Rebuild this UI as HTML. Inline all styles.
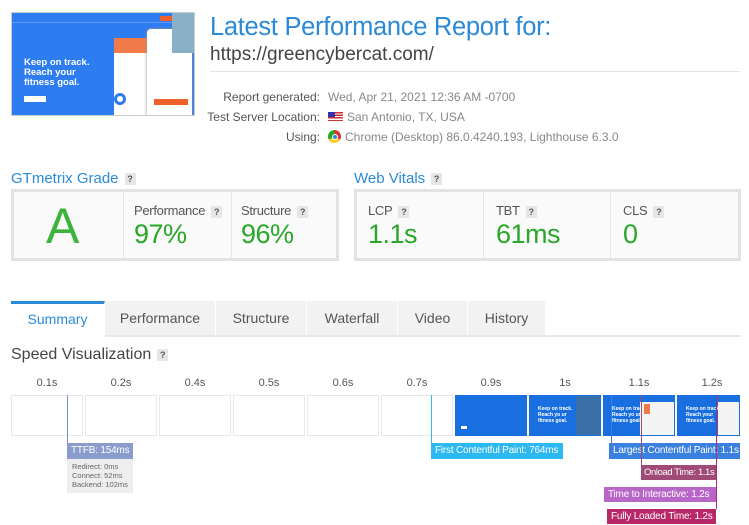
<!DOCTYPE html>
<html><head><meta charset="utf-8"><style>
*{box-sizing:border-box;margin:0;padding:0}
body{width:749px;height:525px;background:#fff;font-family:"Liberation Sans",sans-serif;position:relative;overflow:hidden;color:#444}
.abs{position:absolute}
.q{display:inline-block;width:11px;height:12px;background:#e6e6e6;color:#555;font-size:9px;text-align:center;line-height:12px;font-weight:bold;vertical-align:middle;margin-left:6px}
.box{position:absolute;border:3px solid #e3e3e3;background:#fafafa}
.cell{position:absolute;top:0;bottom:0;border-right:1px solid #e6e6e6}
.lab{position:absolute;top:11px;font-size:13px;color:#555;letter-spacing:-.3px;white-space:nowrap}
.val{position:absolute;top:27px;font-size:27px;color:#28a728;letter-spacing:-.5px}
.tab{position:absolute;top:301px;height:34px;background:#f2f2f2;font-size:14px;color:#555;text-align:center;line-height:34px;border-right:1px solid #fff}
.tick{position:absolute;top:377px;font-size:11px;color:#555;width:40px;text-align:center}
.fr{position:absolute;top:395px;width:72px;height:41px;border:1px solid #e8e8e8;background:#fff;overflow:hidden}
.bf{background:#1a6fe0;border-color:#1a6fe0}
.mk{position:absolute;width:1px}
.tag{position:absolute;height:15px;font-size:10px;color:#fff;line-height:15px;padding:0 4px;white-space:nowrap;overflow:hidden;letter-spacing:-.2px}
.ft{position:absolute;left:8px;top:10px;color:#fff;font-size:5px;line-height:6px;font-weight:bold;white-space:nowrap}
</style></head><body>
<div class="abs" style="left:11px;top:12px;width:184px;height:104px;background:#2d7cf0;border:1px solid #ccc;overflow:hidden">
 <div class="abs" style="left:0;top:0;width:184px;height:10px;background:#2d7cf0;border-bottom:1px solid #5b9af5"></div>
 <div class="abs" style="left:148px;top:3px;width:20px;height:5px;background:#f0602a"></div>
 <div class="abs" style="left:12px;top:45px;color:#fff;font-size:9.5px;font-weight:bold;line-height:10px">Keep on track.<br>Reach your<br>fitness goal.</div>
 <div class="abs" style="left:12px;top:83px;width:22px;height:6px;background:#fff"></div>
 <div class="abs" style="left:102px;top:25px;width:52px;height:80px;background:#fff;border-radius:4px"></div>
 <div class="abs" style="left:102px;top:25px;width:50px;height:15px;background:#f07a4a"></div>
 <div class="abs" style="left:135px;top:16px;width:45px;height:90px;background:#fff;border-radius:4px;box-shadow:0 0 3px #999"></div>
 <div class="abs" style="left:142px;top:86px;width:34px;height:6px;background:#f0602a"></div>
 <div class="abs" style="left:102px;top:80px;width:12px;height:12px;border:3px solid #2d7cf0;border-radius:50%"></div>
 <div class="abs" style="left:160px;top:0;width:24px;height:40px;background:#8ab0c8"></div>
</div>
<div class="abs" style="left:210px;top:13px;font-size:25.5px;color:#2a8ad8;letter-spacing:-.3px">Latest Performance Report for:</div>
<div class="abs" style="left:210px;top:44px;font-size:19px;color:#444">https://greencybercat.com/</div>
<div class="abs" style="left:210px;top:71px;width:530px;height:1px;background:#e5e5e5"></div>
<div class="abs" style="left:190px;top:87px;width:130px;text-align:right;font-size:12px;color:#555;line-height:20px;white-space:nowrap">Report generated:<br>Test Server Location:<br>Using:</div>
<div class="abs" style="left:328px;top:87px;font-size:12px;color:#888;line-height:20px;white-space:nowrap">Wed, Apr 21, 2021 12:36 AM -0700<br><span style="display:inline-block;width:15px;height:9px;background:repeating-linear-gradient(#c33 0 1.3px,#fff 1.3px 2.6px);position:relative;margin-right:4px"><span style="position:absolute;left:0;top:0;width:7px;height:5px;background:#33a"></span></span>San Antonio, TX, USA<br><span style="display:inline-block;width:13px;height:13px;border-radius:50%;background:conic-gradient(#d33 0 120deg,#fc2 120deg 240deg,#2a2 240deg);vertical-align:-2px;margin-right:4px;position:relative"><span style="position:absolute;left:3.5px;top:3.5px;width:6px;height:6px;border-radius:50%;background:#38d;border:1px solid #fff"></span></span>Chrome (Desktop) 86.0.4240.193, Lighthouse 6.3.0</div>

<div class="abs" style="left:11px;top:170px;font-size:15px;color:#2a8ad8">GTmetrix Grade<span class="q">?</span></div>
<div class="abs" style="left:354px;top:170px;font-size:15px;color:#2a8ad8">Web Vitals<span class="q">?</span></div>
<div class="box" style="left:11px;top:189px;width:328px;height:72px">
 <div class="cell" style="left:0;width:110px"><div class="abs" style="left:32px;top:5px;font-size:50px;color:#3cb43c">A</div></div>
 <div class="cell" style="left:110px;width:108px"><div class="lab" style="left:10px">Performance<span class="q">?</span></div><div class="val" style="left:10px">97%</div></div>
 <div class="cell" style="left:218px;width:104px;border:0"><div class="lab" style="left:9px">Structure<span class="q">?</span></div><div class="val" style="left:9px">96%</div></div>
</div>
<div class="box" style="left:354px;top:189px;width:387px;height:72px">
 <div class="cell" style="left:0;width:127px"><div class="lab" style="left:11px">LCP<span class="q">?</span></div><div class="val" style="left:11px">1.1s</div></div>
 <div class="cell" style="left:127px;width:127px"><div class="lab" style="left:12px">TBT<span class="q">?</span></div><div class="val" style="left:12px">61ms</div></div>
 <div class="cell" style="left:254px;width:127px;border:0"><div class="lab" style="left:12px">CLS<span class="q">?</span></div><div class="val" style="left:12px">0</div></div>
</div>

<div class="tab" style="left:11px;width:94px;background:#fff;color:#2a8ad8;border-top:3px solid #2a8ad8;line-height:30px">Summary</div>
<div class="tab" style="left:105px;width:111px">Performance</div>
<div class="tab" style="left:216px;width:91px">Structure</div>
<div class="tab" style="left:307px;width:91px">Waterfall</div>
<div class="tab" style="left:398px;width:70px">Video</div>
<div class="tab" style="left:468px;width:78px">History</div>
<div class="abs" style="left:105px;top:335px;width:636px;height:2px;background:#e8e8e8"></div>

<div class="abs" style="left:11px;top:346px;font-size:16px;color:#444">Speed Visualization<span class="q">?</span></div>

<div class="tick" style="left:27px">0.1s</div><div class="tick" style="left:101px">0.2s</div><div class="tick" style="left:175px">0.4s</div><div class="tick" style="left:249px">0.5s</div><div class="tick" style="left:323px">0.6s</div><div class="tick" style="left:397px">0.7s</div><div class="tick" style="left:471px">0.9s</div><div class="tick" style="left:545px">1s</div><div class="tick" style="left:619px">1.1s</div><div class="tick" style="left:692px">1.2s</div>
<div class="fr" style="left:11px"></div><div class="fr" style="left:85px"></div><div class="fr" style="left:159px"></div><div class="fr" style="left:233px"></div><div class="fr" style="left:307px"></div><div class="fr" style="left:381px"></div>
<div class="fr bf" style="left:455px"><div class="abs" style="left:5px;top:30px;width:6px;height:3px;background:#fff"></div></div>
<div class="fr bf" style="left:529px"><div class="ft">Keep on track.<br>Reach yo ur<br>fitness goal.</div><div class="abs" style="left:46px;top:0;width:26px;height:40px;background:#3a6fa8"></div></div>
<div class="fr bf" style="left:603px"><div class="ft">Keep on track.<br>Reach yo ur<br>fitness goal.</div><div class="abs" style="left:36px;top:6px;width:34px;height:34px;background:#f4f4f4"></div><div class="abs" style="left:40px;top:8px;width:6px;height:10px;background:#f07a4a"></div></div>
<div class="fr bf" style="left:677px;width:63px"><div class="ft">Keep on track.<br>Reach your<br>fitness goal.</div><div class="abs" style="left:40px;top:6px;width:23px;height:34px;background:#f4f4f4"></div></div>

<div class="mk" style="left:67px;top:395px;height:49px;background:#7a8cc4"></div>
<div class="tag" style="left:67px;top:443px;background:#8a9ccc;height:16px;line-height:16px;width:66px">TTFB: 154ms</div>
<div class="abs" style="left:67px;top:459px;width:66px;height:34px;background:#eee;font-size:7.5px;color:#666;padding:3px 5px;line-height:9px">Redirect: 0ms<br>Connect: 52ms<br>Backend: 102ms</div>
<div class="mk" style="left:431px;top:395px;height:48px;background:#2cb8f0"></div>
<div class="tag" style="left:431px;top:443px;background:#2cb8f0;height:16px;line-height:16px;width:132px">First Contentful Paint: 764ms</div>
<div class="mk" style="left:611px;top:395px;height:48px;background:#3a80e0"></div>
<div class="tag" style="left:609px;top:443px;background:#3a80e0;height:16px;line-height:16px;width:131px">Largest Contentful Paint: 1.1s</div>
<div class="mk" style="left:641px;top:395px;height:70px;background:#a04a78"></div>
<div class="tag" style="left:641px;top:465px;background:#a04a78;width:75px;font-size:9.5px;letter-spacing:-.4px;padding:0 3px">Onload Time: 1.1s</div>
<div class="mk" style="left:716px;top:395px;height:114px;background:#b82868"></div>
<div class="tag" style="left:604px;top:487px;background:#b866c8;width:112px">Time to Interactive: 1.2s</div>
<div class="tag" style="left:607px;top:509px;background:#b82868;width:109px">Fully Loaded Time: 1.2s</div>
</body></html>
